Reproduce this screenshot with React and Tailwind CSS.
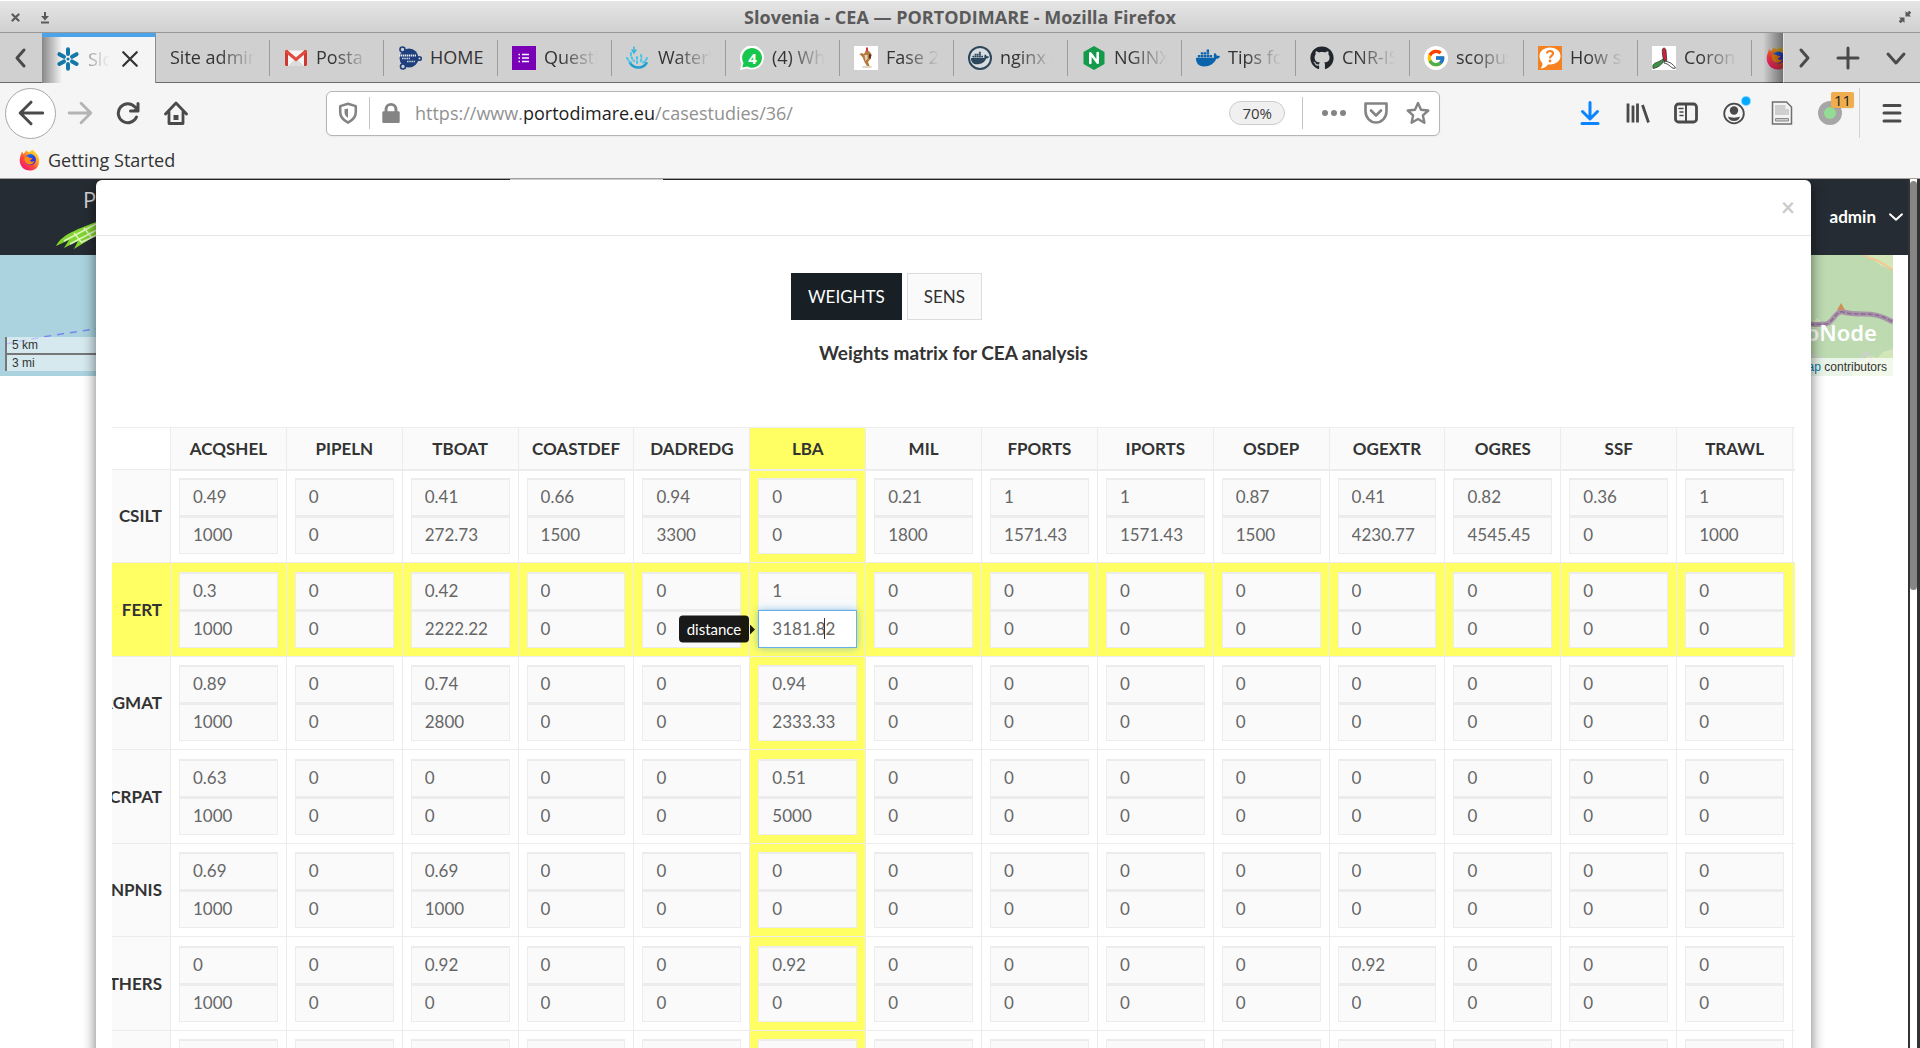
import React from "react";
import { FaGithub, FaDocker } from "react-icons/fa";
import { FcGoogle } from "react-icons/fc";

const COLUMNS = [
  "ACQSHEL", "PIPELN", "TBOAT", "COASTDEF", "DADREDG", "LBA", "MIL",
  "FPORTS", "IPORTS", "OSDEP", "OGEXTR", "OGRES", "SSF", "TRAWL", "",
];
const ACTIVE_COL = 5;
const ACTIVE_ROW = 1;

const Z = ["0", "0"];
const ROWS = [
  {
    label: "CSILT",
    cells: [
      ["0.49", "1000"], Z, ["0.41", "272.73"], ["0.66", "1500"], ["0.94", "3300"], Z, ["0.21", "1800"],
      ["1", "1571.43"], ["1", "1571.43"], ["0.87", "1500"], ["0.41", "4230.77"], ["0.82", "4545.45"], ["0.36", "0"], ["1", "1000"],
    ],
  },
  { label: "FERT", cells: [["0.3", "1000"], Z, ["0.42", "2222.22"], Z, Z, ["1", "3181.82"], Z, Z, Z, Z, Z, Z, Z, Z] },
  { label: "ORGMAT", cells: [["0.89", "1000"], Z, ["0.74", "2800"], Z, Z, ["0.94", "2333.33"], Z, Z, Z, Z, Z, Z, Z, Z] },
  { label: "MICRPAT", cells: [["0.63", "1000"], Z, Z, Z, Z, ["0.51", "5000"], Z, Z, Z, Z, Z, Z, Z, Z] },
  { label: "SYNPNIS", cells: [["0.69", "1000"], Z, ["0.69", "1000"], Z, Z, Z, Z, Z, Z, Z, Z, Z, Z, Z] },
  { label: "OTHERS", cells: [["0", "1000"], Z, ["0.92", "0"], Z, Z, ["0.92", "0"], Z, Z, Z, Z, ["0.92", "0"], Z, Z, Z] },
  { label: "", cells: Array.from({ length: 14 }, () => ["", ""]) },
];

/* ---------- favicons ---------- */

const Snowflake = () => (
  <svg viewBox="0 0 24 24" className="size-6 shrink-0" stroke="#1579a8" strokeWidth="4" strokeLinecap="round">
    <path d="M12 2.2V7M12 17v4.800M3.400 7.200l4.600 2.600M16 14.400l4.600 2.600M3.400 17l4.600-2.600M16 9.800l4.600-2.600" />
    <circle cx="12" cy="12" r="1.600" fill="#1579a8" stroke="none" />
  </svg>
);
const Gmail = () => (
  <svg viewBox="0 0 24 24" className="size-6">
    <path d="M2 4.500h20V20H2z" fill="#f4f4f4" />
    <path d="M4 20l8-8 8 8z" fill="#dcdcdc" />
    <path d="M1 5.500C1 4.700 1.700 4 2.500 4H4v16H2.500C1.700 20 1 19.300 1 18.500zM23 5.500c0-.8-.7-1.500-1.500-1.500H20v16h1.500c.8 0 1.500-.7 1.500-1.500z" fill="#cf3a30" />
    <path d="M2 5l10 8.500L22 5" fill="none" stroke="#e04b3f" strokeWidth="3" />
  </svg>
);
const HomeLogo = () => (
  <svg viewBox="0 0 24 24" className="size-6">
    <circle cx="11" cy="12" r="9.500" fill="#1f3f7d" />
    <g fill="#d0d0d0" stroke="#1f3f7d" strokeWidth="1.600">
      <circle cx="4.500" cy="3.500" r="2.500" />
      <circle cx="5" cy="20.500" r="2.500" />
      <circle cx="21.500" cy="12.500" r="1.800" />
    </g>
    <path d="M1 9.500h17" stroke="#e4e8f0" strokeWidth="2" strokeDasharray="1.400 .6" />
    <path d="M4 12.500h8M9 15.500h8" stroke="#c4cede" strokeWidth="1.400" strokeDasharray="1.600 .6" />
  </svg>
);
const Forms = () => (
  <svg viewBox="0 0 24 24" className="size-6">
    <path d="M0 0h24v24H0z" fill="#7a00b8" />
    <path d="M10 8.500h7M10 12h7M10 15.500h7M6.500 8.500H8M6.500 12H8M6.500 15.500H8" stroke="#fff" strokeWidth="1.500" />
  </svg>
);
const Water = () => (
  <svg viewBox="0 0 24 24" className="size-6" fill="none" strokeLinecap="round">
    <path d="M4 17c2 3 5 4.500 8.500 4.500 4 0 6.500-2 8-4.500" stroke="#1f9fd0" strokeWidth="2.500" />
    <path d="M1 12c1 2 2 3.500 4 4.500M5 7c-.5 3 1 6 3 8M11 11v7M15 9c1 3 0 6-1 8M21 12c-1 2-2 3.500-4 4.500" stroke="#48c4e6" strokeWidth="2" strokeDasharray="2 2.200" />
    <path d="M8 1v5M6 4l2 3 2-3" stroke="#35b6de" strokeWidth="1.500" />
  </svg>
);
const WhatsApp = () => (
  <svg viewBox="0 0 24 24" className="size-6">
    <path d="M0 24l1.500-6.500A12 12 0 1 1 7 22.500z" fill="#fff" />
    <path d="M2.300 21.500l1.200-4.600A9.900 9.900 0 1 1 7.300 20.600z" fill="#17c64c" />
    <text x="12.500" y="17.500" textAnchor="middle" fontSize="15" fontWeight="700" fill="#fff" fontFamily="Open Sans">4</text>
  </svg>
);
const Figure = () => (
  <svg viewBox="0 0 24 24" className="size-6">
    <path d="M0 0h24v24H0z" fill="#fff" />
    <path d="M12 4l3 1 2.500 3-1 5-2.500 3 2 5-3-1-2.500-4-2-5-3-3 2-1 2.500 1z" fill="#b5793e" />
    <path d="M12 1.500h2v3.500h-2z" fill="#cf3434" />
    <path d="M10.500 9h3v4l-2 2z" fill="#e6d3bb" />
    <path d="M8.500 20h9v2h-9z" fill="#e3d5c6" />
    <path d="M15 8l2.500 1-1 4-1.500-1z" fill="#5b2f1b" />
  </svg>
);
const DockerRing = () => (
  <span className="flex size-6 items-center justify-center rounded-full border-2 border-[#2c475c] bg-[#d8dde0]">
    <FaDocker className="size-[18px] text-[#2c475c]" />
  </span>
);
const Nginx = () => (
  <svg viewBox="0 0 24 24" className="size-6">
    <path d="M12 0l10.500 6v12L12 24 1.500 18V6z" fill="#139a4b" />
    <path d="M8.300 17V7.300l7.400 9.400V7" fill="none" stroke="#fff" strokeWidth="2.600" strokeLinecap="round" strokeLinejoin="round" />
  </svg>
);
const Question = () => (
  <svg viewBox="0 0 24 24" className="size-6">
    <path d="M0 0h24v24H0z" fill="#f68121" />
    <path d="M12 1.500c6 0 10.500 3.600 10.500 8.500S18 18.500 12 18.500l-2-.1C8 21 5.500 22.500 2.500 22.500c1.500-1.600 2-3.500 1.800-5.600C2.500 15.200 1.500 12.800 1.500 10 1.500 5.100 6 1.500 12 1.500z" fill="#fff" />
    <path d="M9 7.500C9 5.700 10.400 5 12 5s3 .9 3 2.600c0 2.200-3 2.300-3 4.700" fill="none" stroke="#f68121" strokeWidth="2.200" />
    <circle cx="12" cy="15" r="1.400" fill="#f68121" />
  </svg>
);
const TriBlade = () => (
  <svg viewBox="0 0 24 24" className="size-6">
    <path d="M0 0h24v24H0z" fill="#fff" />
    <path d="M10.500 3c1.500-2 3.500-.5 3.500 2l.8 9.500-2.800.5C10.500 11 10 6 10.500 3z" fill="#cf2038" stroke="#333" strokeWidth=".8" />
    <path d="M11.800 12.500C12 17 7 21.500 1.200 22.500 0 19.500 1.500 17.500 4.500 16.500c3-1 5-2.300 7.300-4z" fill="#3d9440" stroke="#333" strokeWidth=".8" />
    <path d="M12 15.500c4-.5 9 2 11.500 6.500-2 .8-3 .2-5-1.500-2-1.900-4-3-6.500-3.500z" fill="#fff" stroke="#333" strokeWidth=".9" />
  </svg>
);
const Firefox = ({ className = "size-6" }) => (
  <svg viewBox="0 0 24 24" className={className}>
    <defs>
      <linearGradient id="fxBody" x1="1" y1="0" x2="0.200" y2="1">
        <stop offset="0" stopColor="#fff44f" />
        <stop offset="0.350" stopColor="#ffb01f" />
        <stop offset="0.650" stopColor="#ff4a3a" />
        <stop offset="1" stopColor="#f0107a" />
      </linearGradient>
      <linearGradient id="fxGlobe" x1="0" y1="0" x2="1" y2="1">
        <stop offset="0" stopColor="#0a7cff" />
        <stop offset="1" stopColor="#4a12c8" />
      </linearGradient>
    </defs>
    <path d="M3 3c.8.600 1.500 1.400 1.800 2.400C6.400 4 7.500 2 8 1c.8 1.200 1.500 2 3 2.600L15 .5c1 2 3 2.600 5 5.500 4.500 7.500 1 17.500-8 17.500S-1 15 1.500 8C2 6 2.700 4.800 3 3z" fill="url(#fxBody)" />
    <circle cx="12.500" cy="11.500" r="6" fill="url(#fxGlobe)" />
    <path d="M6 9c2-1.500 4-.8 5 .5 1.500.3 3 0 3.500.8-.8 1.600-2.500 1.500-2.500 2.500 1 1.700 3.500 1.200 5 .2-1 3-4 4.500-7 3.500S5.500 13 6 9z" fill="#ff8a16" />
  </svg>
);

const TABS = [
  { label: "Site admin" },
  { label: "Posta i", icon: <Gmail /> },
  { label: "HOME", icon: <HomeLogo /> },
  { label: "Questi", icon: <Forms /> },
  { label: "WaterV", icon: <Water /> },
  { label: "(4) Wh", icon: <WhatsApp /> },
  { label: "Fase 2", icon: <Figure /> },
  { label: "nginx -", icon: <DockerRing /> },
  { label: "NGINX", icon: <Nginx /> },
  { label: "Tips fo", icon: <FaDocker className="size-6 text-[#0b63ab]" /> },
  { label: "CNR-IS", icon: <FaGithub className="size-6 text-[#20262c]" /> },
  {
    label: "scopus",
    icon: (
      <span className="flex size-6 items-center justify-center rounded-full bg-white">
        <FcGoogle className="size-5" />
      </span>
    ),
  },
  { label: "How s", icon: <Question /> },
  { label: "Coron", icon: <TriBlade /> },
];

function Stroke({ children, className = "size-6", width = 3 }) {
  return (
    <svg viewBox="0 0 24 24" className={className} fill="none" stroke="currentColor" strokeWidth={width} strokeLinecap="round" strokeLinejoin="round">
      {children}
    </svg>
  );
}

/* ---------- browser chrome ---------- */

function TitleBar() {
  return (
    <header className="flex h-[33px] shrink-0 items-center border-t border-b border-t-white border-b-[#989898] bg-linear-to-b from-[#e5e5e5] to-[#d1d1d1] px-2 text-[#5a5a5a]">
      <div className="flex w-24 items-center gap-4">
        <button aria-label="Close window" className="flex size-[14px] items-center justify-center pt-[2px]">
          <Stroke className="size-[9px]" width={6}><path d="M4 4l16 16M20 4L4 20" /></Stroke>
        </button>
        <button aria-label="Minimize window" className="flex size-[14px] items-center justify-center pt-[2px]">
          <svg viewBox="0 0 10 12" className="h-3 w-[10px]" fill="currentColor"><path d="M4 0h2v4h3L5 8.500 1 4h3zM1 9.500h8v2H1z" /></svg>
        </button>
      </div>
      <h1 className="flex-1 text-center text-[18px] leading-6 font-bold">Slovenia - CEA — PORTODIMARE - Mozilla Firefox</h1>
      <div className="flex w-24 justify-end">
        <button aria-label="Restore window" className="flex size-[14px] items-center justify-center">
          <svg viewBox="0 0 12 12" className="size-3" fill="currentColor"><path d="M6.500 0v5.500H12l-1.700-1.700L12.300 1.700 10.300-.3 8.200 1.700zM0 6.500h5.500V12l-1.700-1.700L1.700 12.300-.3 10.300 1.700 8.200z" /></svg>
        </button>
      </div>
    </header>
  );
}

function TabStrip() {
  return (
    <nav aria-label="Tabs" className="flex h-[50px] shrink-0 bg-[#d0d0d0] text-[18px] text-[#333]">
      <button aria-label="Scroll tabs left" className="flex w-[42px] items-center justify-center border-b border-[#6b6b6b] text-[#4a4a4a]">
        <Stroke><path d="M15 4l-7 8 7 8" /></Stroke>
      </button>
      <div className="relative flex flex-1 overflow-hidden">
        <div className="relative flex w-[114px] shrink-0 items-center gap-2 border-t-4 border-r border-t-[#4ba3ea] border-r-[#8c8c8c] bg-[#f5f5f5] pb-[2px] pl-[14px]">
          <Snowflake />
          <span className="w-[22px] overflow-hidden whitespace-nowrap text-[#777] [mask-image:linear-gradient(to_left,transparent,black_32px)]">Slo</span>
          <button aria-label="Close tab" className="flex size-6 shrink-0 items-center justify-center text-[#333]">
            <Stroke className="size-[18px]" width={3}><path d="M3 3l18 18M21 3L3 21" /></Stroke>
          </button>
          <div className="absolute inset-y-0 left-0 w-5 bg-linear-to-r from-black/45 to-transparent" />
        </div>
        {TABS.map((t, i) => (
          <div key={i} className="flex w-[114px] shrink-0 items-center border-b border-[#6b6b6b]">
            <button className="flex h-9 w-full items-center gap-2 border-r border-[#9b9b9b] px-[14px]">
              {t.icon && <span className="size-6 shrink-0">{t.icon}</span>}
              <span
                className={
                  t.label === "HOME"
                    ? "flex-1 text-left whitespace-nowrap"
                    : "flex-1 overflow-hidden text-left whitespace-nowrap [mask-image:linear-gradient(to_left,transparent,black_36px)]"
                }
              >
                {t.label}
              </span>
            </button>
          </div>
        ))}
        <div className="flex w-[114px] shrink-0 items-center border-b border-[#6b6b6b] pl-[14px]">
          <Firefox className="size-6 shrink-0" />
        </div>
        <div className="absolute inset-y-0 right-0 w-5 bg-linear-to-l from-black/45 to-transparent" />
      </div>
      <div className="flex items-center border-b border-l border-b-[#6b6b6b] border-l-[#e4e4e4] text-[#4a4a4a]">
        <button aria-label="Scroll tabs right" className="flex w-10 items-center justify-center"><Stroke><path d="M9 4l7 8-7 8" /></Stroke></button>
        <button aria-label="New tab" className="flex w-12 items-center justify-center"><Stroke><path d="M12 2v20M2 12h20" /></Stroke></button>
        <button aria-label="List all tabs" className="flex w-12 items-center justify-center"><Stroke><path d="M4 8l8 9 8-9" /></Stroke></button>
      </div>
    </nav>
  );
}

function ToolButton({ label, children }) {
  return (
    <button aria-label={label} className="relative flex h-12 w-12 shrink-0 items-center justify-center">
      {children}
    </button>
  );
}

function NavBar() {
  return (
    <div className="flex h-[60px] shrink-0 items-center bg-[#f5f5f5] pr-1 pl-[5px] text-[#4a4a4a]">
      <button aria-label="Back" className="flex size-[51px] shrink-0 items-center justify-center rounded-full border border-[#a8a8a8] bg-white">
        <Stroke className="size-[26px]" width={2.700}><path d="M23 12H2M12 2L2 12l10 10" /></Stroke>
      </button>
      <ToolButton label="Forward"><Stroke className="size-[26px] text-[#b4b4b4]" width={2.600}><path d="M2 12h19M13 3l9 9-9 9" /></Stroke></ToolButton>
      <ToolButton label="Reload">
        <Stroke width={3}><path d="M20.500 16A9.500 9.500 0 1 1 19 6M22 2.500V10h-7.500" /><path d="M17 9.500h5V4.500z" fill="currentColor" stroke="none" /></Stroke>
      </ToolButton>
      <ToolButton label="Home">
        <Stroke width={2.800}><path d="M1.500 13L12 2l10.500 11M5 11v11.500h14V11" /><path d="M12 14v5" strokeWidth="5" strokeLinecap="butt" /></Stroke>
      </ToolButton>

      <div className="mx-[126px] flex h-[45px] flex-1 items-center rounded-md border border-[#b5b5b5] bg-white shadow-xs text-[#848484]">
        <button aria-label="Tracking protection" className="flex w-[42px] items-center justify-center">
          <Stroke className="size-[22px]" width={2.800}><path d="M12 2l8.500 2.500V11c0 5.500-3.500 9-8.500 11.500C7 20 3.500 16.500 3.500 11V4.500z" /><path d="M12 7v10.500c-3-2-3.800-4-3.800-6.500V8z" fill="currentColor" stroke="none" /></Stroke>
        </button>
        <span className="h-8 w-px bg-[#c4c4c4]" />
        <button aria-label="Site information" className="flex w-[42px] items-center justify-center">
          <svg viewBox="0 0 24 24" className="size-[22px]"><path d="M5 10V8a7 7 0 0 1 14 0v2h1a1.500 1.500 0 0 1 1.500 1.500v10A1.500 1.500 0 0 1 20 23H4a1.500 1.500 0 0 1-1.500-1.500v-10A1.500 1.500 0 0 1 4 10zm3.200 0h7.600V8a3.800 3.800 0 0 0-7.600 0z" fill="currentColor" /></svg>
        </button>
        <div role="textbox" aria-label="Address" contentEditable suppressContentEditableWarning className="ml-[3px] flex-1 text-[18px] whitespace-nowrap text-[#919191] outline-none">
          https://www.<span className="text-[#1d1d1d]">portodimare.eu</span>/casestudies/36/
        </div>
        <button className="h-6 rounded-full border border-[#cccccc] bg-[#f0f0f0] px-3 text-[15px] leading-5 text-[#3a3a3a]">70%</button>
        <span className="mr-[10px] ml-[17px] h-8 w-px bg-[#c4c4c4]" />
        <button aria-label="Page actions" className="flex w-[42px] items-center justify-center">
          <svg viewBox="0 0 24 24" className="size-6" fill="currentColor"><circle cx="3" cy="12" r="3" /><circle cx="12" cy="12" r="3" /><circle cx="21" cy="12" r="3" /></svg>
        </button>
        <button aria-label="Save to Pocket" className="flex w-[42px] items-center justify-center">
          <Stroke width={2.600}><path d="M1.500 2.500h21V10c0 7-5 11.500-10.500 11.500S1.500 17 1.500 10z" /><path d="M7 9.500l5 5 5-5" /></Stroke>
        </button>
        <button aria-label="Bookmark" className="flex w-[42px] items-center justify-center">
          <Stroke width={2.400}><path d="M12 2l3 6.700 7.300.8-5.400 4.900 1.500 7.300L12 18l-6.400 3.700 1.500-7.300L1.700 9.500 9 8.700z" /></Stroke>
        </button>
      </div>

      <ToolButton label="Downloads"><Stroke className="size-6 text-[#0a84ff]"><path d="M12 1.500v16M4.500 10.500l7.500 7.500 7.500-7.500" /><path d="M4 22.500h16" /></Stroke></ToolButton>
      <ToolButton label="Library"><Stroke width={2.800}><path d="M2 2.500v19M7 4.500v17M11.500 2.500v19M16.500 4l6 17.500" strokeLinecap="butt" /></Stroke></ToolButton>
      <ToolButton label="Sidebar">
        <Stroke width={2.800}><rect x="1.500" y="3" width="21" height="18" rx="3" /><path d="M12 3v18" strokeWidth="2" /><path d="M5 7.500h4M6 11h3M6 14.500h3" strokeWidth="1.500" /></Stroke>
      </ToolButton>
      <ToolButton label="Account">
        <Stroke width={1.800}><circle cx="12" cy="12.500" r="9.800" /><circle cx="12" cy="9.500" r="4.200" fill="currentColor" stroke="none" /><path d="M6 15.500c3 1.500 9 1.500 12 0-.5 3-3 4.500-6 4.500s-5.500-1.500-6-4.500z" fill="currentColor" stroke="none" /></Stroke>
        <span className="absolute top-2 right-2 size-2 rounded-full bg-[#00aaff] ring-1 ring-[#7ad1ff]" />
      </ToolButton>
      <ToolButton label="Notes">
        <svg viewBox="0 0 24 24" className="size-6"><path d="M2.500 1h14l5 5v17h-19z" fill="#f3f3f3" stroke="#6f6f6f" strokeWidth="1.500" /><path d="M5 4h10.500v4H19v6H5z" fill="#cfcfcf" /><path d="M5.500 17.500h13v2.500h-13z" fill="#ccc" stroke="#8a8a8a" /></svg>
      </ToolButton>
      <ToolButton label="Privacy extension">
        <span className="size-6 rounded-full border-[6px] border-[#a6a6a6] bg-[#93dc94]" />
        <span className="absolute top-[3px] left-[25px] rounded-xs bg-[#f0ad4e] px-[3px] text-[15px] leading-4 text-[#222] shadow-xs">11</span>
      </ToolButton>
      <span className="mr-2 ml-[5px] h-[50px] w-px bg-[#d2d2d2]" />
      <ToolButton label="Menu"><Stroke width={3}><path d="M4 4.500h16M4 12h16M4 20h16" /></Stroke></ToolButton>
    </div>
  );
}

/* ---------- page behind the dialog ---------- */

function MapStrip() {
  return (
    <div className="relative mr-[15px] h-[121px] overflow-hidden bg-[#aad3df]">
      <svg className="absolute top-0 left-0 h-full w-24" viewBox="0 0 96 121">
        <path d="M6 89Q50 80 96 74" fill="none" stroke="#7a86f0" strokeWidth="1.500" strokeDasharray="7 6" />
      </svg>
      <svg className="absolute top-0 right-0 h-full w-[90px]" viewBox="0 0 90 121">
        <path d="M0 0h90v121H0z" fill="#bddab1" />
        <path d="M60 0h30v14l-12-3-8-7zM90 94l-10 3-6 6-8-3-6 6-10 2v13h40zM8 68l6-5 5 4-3 5-8 1z" fill="#d3e6b8" />
        <path d="M62 0c4 6 10 2 15 7l13 8" fill="none" stroke="#f6c68c" strokeWidth="2" />
        <path d="M0 67c8 4 14 2 22 2s10-14 18-12 10 2 20 2 18 1 30 8" fill="none" stroke="#a894a8" strokeWidth="5" />
        <path d="M0 67c8 4 14 2 22 2s10-14 18-12 10 2 20 2 18 1 30 8" fill="none" stroke="#8c6a94" strokeWidth="1.500" strokeDasharray="5 2" />
        <path d="M34 55l4-7 4 7z" fill="#d08f5a" />
        <path d="M0 98c8 0 14 2 20 8M58 102l6-5 5 8-5 5z" fill="none" stroke="#cfd0cc" strokeWidth="2" />
      </svg>
      <div className="absolute bottom-[5px] left-[5px] w-40 border-l-2 border-[#777] font-['Liberation_Sans',sans-serif] text-[12px] leading-4 text-[#333]">
        <div className="border-b-2 border-[#777] bg-white/50 pl-[5px]">5 km</div>
        <div className="bg-white/50 pl-[5px]">3 mi</div>
      </div>
      <strong className="absolute right-4 bottom-[30px] font-['Noto_Sans',sans-serif] text-[22px] leading-7 font-semibold text-white">GeoNode</strong>
      <p className="absolute right-0 bottom-0 bg-white/70 px-[6px] font-['Liberation_Sans',sans-serif] text-[12px] leading-[18px] text-[#333]">
        <a href="#osm" className="text-[#0078a8]">OpenStreetMap</a> contributors
      </p>
    </div>
  );
}

function SiteHeader() {
  return (
    <div className="flex h-[76px] items-center justify-between bg-[#262c33] pr-1 pl-[54px]">
      <div className="flex h-full flex-col pt-2">
        <span className="ml-[29px] text-[22px] leading-6 text-[#d5d5d5]">Portodimare</span>
        <svg viewBox="0 0 120 40" className="h-10 w-[120px]">
          <path d="M2 35C8 22 30 16 50 8l40-6v22L46 22 20 38l4-8-14 7 5-8z" fill="#83d42f" />
          <path d="M10 30L44 12M16 33L60 10M28 31L64 14M20 22l8 10M30 17l8 10M42 12l6 10" stroke="#dff5c2" strokeWidth="1.500" />
        </svg>
      </div>
      <button className="flex items-center gap-3 font-[Lato,sans-serif] text-[17px] font-bold text-white">
        admin
        <Stroke className="size-4" width={3}><path d="M3 8l9 8 9-8" /></Stroke>
      </button>
    </div>
  );
}

/* ---------- matrix dialog ---------- */

function Field({ value, label, active }) {
  if (active) {
    return (
      <div className="relative z-10">
        <input
          aria-label={label}
          defaultValue={value}
          className="block h-[38px] w-full border border-[#66afe9] bg-white px-[13px] pb-px text-[17px] text-[#666] shadow-[0_0_8px_rgba(102,175,233,0.7)] outline-none"
        />
        <span className="absolute top-2 left-[66px] h-[21px] w-px bg-[#333]" />
        <div role="tooltip" className="absolute top-1/2 right-[calc(100%+3px)] flex -translate-y-1/2 items-center gap-px">
          <span className="rounded-[4px] bg-black/90 px-2 text-[15px] leading-[27px] text-white">distance</span>
          <svg viewBox="0 0 5 10" className="h-[10px] w-[5px]"><path d="M0 0l5 5-5 5z" fill="#1a1a00" /></svg>
        </div>
      </div>
    );
  }
  return (
    <input
      aria-label={label}
      defaultValue={value}
      className="block h-[38px] w-full border border-[#ececec] bg-[#fafafa] px-[13px] pb-px text-[17px] text-[#666] shadow-[inset_0_1px_0_#ececec] outline-none"
    />
  );
}

function Matrix() {
  return (
    <div className="overflow-hidden">
      <table className="-ml-[42px] w-[calc(100%+156px)] table-fixed border-separate border-spacing-0">
        <colgroup>
          <col className="w-[101px]" />
          {COLUMNS.map((c, i) => <col key={i} />)}
        </colgroup>
        <thead>
          <tr>
            <td className="h-[43px] border-t border-r border-b border-[#ececec]" />
            {COLUMNS.map((c, i) => (
              <th
                key={i}
                scope="col"
                className={`border-t border-r border-b border-[#ececec] text-[17px] font-bold text-[#333] ${i === ACTIVE_COL ? "bg-[#fffe62]" : "bg-[#fafafa]"}`}
              >
                {c}
              </th>
            ))}
          </tr>
        </thead>
        <tbody>
          {ROWS.map((row, r) => (
            <tr key={r} className="group">
              <th
                scope="row"
                className={`border-r border-b border-[#ececec] pr-2 text-right text-[17px] font-bold text-[#333] ${r === ACTIVE_ROW ? "bg-[#fffe62]" : "bg-[#fafafa]"}`}
              >
                {row.label}
              </th>
              {[...row.cells, ["", ""]].map((cell, c) => (
                <td
                  key={c}
                  className={`border-r border-b border-[#ececec] px-2 pt-2 pb-2 group-even:pt-[9px] group-first:shadow-[inset_0_1px_0_#ececec] ${
                    r === ACTIVE_ROW || c === ACTIVE_COL ? "bg-[#fffe62]" : "bg-white"
                  }`}
                >
                  <Field value={cell[0]} label={`${row.label} ${COLUMNS[c]} weight`} />
                  <Field value={cell[1]} label={`${row.label} ${COLUMNS[c]} distance`} active={r === ACTIVE_ROW && c === ACTIVE_COL} />
                </td>
              ))}
            </tr>
          ))}
        </tbody>
      </table>
    </div>
  );
}

function Dialog() {
  return (
    <div className="absolute inset-0 flex flex-col overflow-hidden pt-px pr-[97px] pl-24">
      <section role="dialog" aria-label="Weights matrix" className="flex-1 rounded-t-md bg-white font-[Lato,sans-serif] shadow-[0_4px_14px_rgba(0,0,0,0.55)]">
        <div className="flex h-14 items-center justify-end border-b border-[#e5e5e5] pr-4 pb-[2px]">
          <button aria-label="Close" className="text-[24px] leading-6 font-bold text-[#cbcbcb]">×</button>
        </div>
        <div className="px-4 pt-[37px]">
          <div className="flex justify-center gap-[5px] pr-[134px] text-[17px]">
            <button className="h-[47px] border border-[#182026] bg-[#182026] px-4 text-white">WEIGHTS</button>
            <button className="h-[47px] border border-[#dcdcdc] bg-[#fafafa] px-4 text-[#333]">SENS</button>
          </div>
          <h2 className="mt-[21px] mb-[62px] text-center text-[19px] leading-6 font-bold text-[#333]">Weights matrix for CEA analysis</h2>
          <Matrix />
        </div>
      </section>
    </div>
  );
}

export default function App() {
  return (
    <div className="flex h-screen flex-col overflow-hidden bg-white font-['Open_Sans',sans-serif]">
      <TitleBar />
      <TabStrip />
      <NavBar />
      <div className="flex h-9 shrink-0 items-center gap-[7px] border-b border-[#a4a09c] bg-[#f5f5f5] pb-px pl-[19px] text-[18px] text-[#333]">
        <Firefox className="size-[22px]" />
        <a href="#getting-started">Getting Started</a>
      </div>
      <div className="flex min-h-0 flex-1">
        <main className="relative min-w-0 flex-1 overflow-hidden">
          <SiteHeader />
          <MapStrip />
          <Dialog />
          <div className="absolute top-0 left-[510px] h-px w-[153px] bg-[#cfcfcf]" />
        </main>
        <div className="w-3 shrink-0 border-r-[3px] border-l-2 border-r-[#333] border-l-[#333] bg-white pt-[2px]">
          <div className="h-[409px] rounded-full bg-[#868686]" />
        </div>
      </div>
    </div>
  );
}
